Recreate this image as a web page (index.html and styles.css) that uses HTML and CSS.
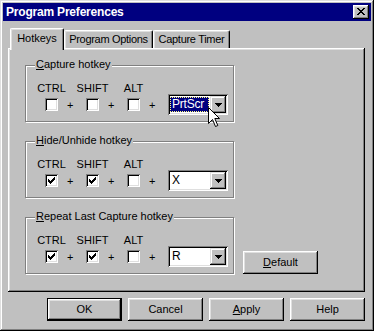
FILE: index.html
```html
<!DOCTYPE html>
<html>
<head>
<meta charset="utf-8">
<link rel="stylesheet" href="styles.css">
</head>
<body>
<div class="window">
  <div class="titlebar">
    <span class="title">Program Preferences</span>
    <span class="close"><svg width="8" height="7" viewBox="0 0 8 7"><path d="M0 0.5h2M6 0.5h2M1 1.5h2M5 1.5h2M2 2.5h4M3 3.5h2M2 4.5h4M1 5.5h2M5 5.5h2M0 6.5h2M6 6.5h2" stroke="#000" shape-rendering="crispEdges"/></svg></span>
  </div>
  <div class="content">
    <div class="tabs">
      <div class="tab active">Hotkeys</div>
      <div class="tab w-po">Program Options</div>
      <div class="tab w-ct">Capture Timer</div>
    </div>
    <div class="panel">
      <div class="row">
        <div class="group">
          <div class="legend"><u>C</u>apture hotkey</div>
          <div class="keys">
            <div class="lbl k1">CTRL</div>
            <div class="lbl k2">SHIFT</div>
            <div class="lbl k3">ALT</div>
            <span class="cb"></span><span class="plus">+</span>
            <span class="cb"></span><span class="plus">+</span>
            <span class="cb"></span><span class="plus">+</span>
            <div class="combo">
              <span class="val sel">PrtScr</span>
              <span class="drop"><svg width="7" height="4" viewBox="0 0 7 4"><path d="M0 0.5h7M1 1.5h5M2 2.5h3M3 3.5h1" stroke="#000" shape-rendering="crispEdges"/></svg></span>
              <svg class="cursor" width="13" height="21" viewBox="0 0 13 21"><path d="M0.5 0.5V16.5L4.5 12.5L7.5 19.5L9.8 18.5L6.8 11.5H11.5Z" fill="#fff" stroke="#000" stroke-linejoin="miter"/></svg>
            </div>
          </div>
        </div>
      </div>
      <div class="row">
        <div class="group">
          <div class="legend"><u>H</u>ide/Unhide hotkey</div>
          <div class="keys">
            <div class="lbl k1">CTRL</div>
            <div class="lbl k2">SHIFT</div>
            <div class="lbl k3">ALT</div>
            <span class="cb"><svg width="7" height="7" viewBox="0 0 7 7"><path d="M0 2h1v1h1v1h1v-1h1v-1h1v-1h1v-1h1v3h-1v1h-1v1h-1v1h-1v1h-1v-1h-1v-1h-1z" fill="#000"/></svg></span><span class="plus">+</span>
            <span class="cb"><svg width="7" height="7" viewBox="0 0 7 7"><path d="M0 2h1v1h1v1h1v-1h1v-1h1v-1h1v-1h1v3h-1v1h-1v1h-1v1h-1v1h-1v-1h-1v-1h-1z" fill="#000"/></svg></span><span class="plus">+</span>
            <span class="cb"></span><span class="plus">+</span>
            <div class="combo">
              <span class="val">X</span>
              <span class="drop"><svg width="7" height="4" viewBox="0 0 7 4"><path d="M0 0.5h7M1 1.5h5M2 2.5h3M3 3.5h1" stroke="#000" shape-rendering="crispEdges"/></svg></span>
            </div>
          </div>
        </div>
      </div>
      <div class="row">
        <div class="group">
          <div class="legend"><u>R</u>epeat Last Capture hotkey</div>
          <div class="keys">
            <div class="lbl k1">CTRL</div>
            <div class="lbl k2">SHIFT</div>
            <div class="lbl k3">ALT</div>
            <span class="cb"><svg width="7" height="7" viewBox="0 0 7 7"><path d="M0 2h1v1h1v1h1v-1h1v-1h1v-1h1v-1h1v3h-1v1h-1v1h-1v1h-1v1h-1v-1h-1v-1h-1z" fill="#000"/></svg></span><span class="plus">+</span>
            <span class="cb"><svg width="7" height="7" viewBox="0 0 7 7"><path d="M0 2h1v1h1v1h1v-1h1v-1h1v-1h1v-1h1v3h-1v1h-1v1h-1v1h-1v1h-1v-1h-1v-1h-1z" fill="#000"/></svg></span><span class="plus">+</span>
            <span class="cb"></span><span class="plus">+</span>
            <div class="combo">
              <span class="val">R</span>
              <span class="drop"><svg width="7" height="4" viewBox="0 0 7 4"><path d="M0 0.5h7M1 1.5h5M2 2.5h3M3 3.5h1" stroke="#000" shape-rendering="crispEdges"/></svg></span>
            </div>
          </div>
        </div>
        <button class="btn btn-default"><u>D</u>efault</button>
      </div>
    </div>
    <div class="buttons">
      <button class="btn btn-primary">OK</button>
      <button class="btn">Cancel</button>
      <button class="btn"><u>A</u>pply</button>
      <button class="btn">Help</button>
    </div>
  </div>
</div>
</body>
</html>
```

FILE: styles.css
```css
* { box-sizing: border-box; }
html, body { margin: 0; padding: 0; }
body {
  width: 374px;
  height: 331px;
  overflow: hidden;
  background: #c0c0c0;
  font-family: "Liberation Sans", Arial, sans-serif;
  font-size: 11px;
  color: #000;
}
.window {
  width: 374px;
  height: 331px;
  padding: 3px;
  background: #c0c0c0;
  box-shadow: inset -1px -1px #000, inset 1px 1px #dfdfdf, inset -2px -2px #808080, inset 2px 2px #fff;
  display: flex;
  flex-direction: column;
}
.titlebar {
  height: 18px;
  background: #000080;
  color: #fff;
  display: flex;
  align-items: center;
  padding: 0 2px 0 3px;
}
.title {
  flex: 1;
  font-weight: bold;
  font-size: 12px;
  letter-spacing: -0.2px;
  line-height: 18px;
}
.close {
  width: 16px;
  height: 14px;
  background: #c0c0c0;
  box-shadow: inset -1px -1px #000, inset 1px 1px #fff, inset -2px -2px #808080, inset 2px 2px #dfdfdf;
  display: flex;
  align-items: flex-start;
  justify-content: center;
  padding-top: 3px;
}
.close svg { display: block; }
.content {
  flex: 1;
  display: flex;
  flex-direction: column;
  padding: 7px 6px 0 5px;
}
.tabs {
  height: 20px;
  display: flex;
  align-items: flex-end;
  padding-left: 2px;
}
.tab {
  height: 18px;
  width: 54px;
  text-align: center;
  line-height: 13px;
  padding-top: 2px;
  white-space: nowrap;
  letter-spacing: -0.3px;
  background: #c0c0c0;
  border-top: 1px solid #fff;
  border-left: 1px solid #fff;
  border-right: 1px solid #000;
  border-radius: 2px 2px 0 0;
  box-shadow: inset -1px 0 #808080, inset 1px 1px #dfdfdf;
}
.tab.active {
  height: 22px;
  margin-bottom: -2px;
  padding-top: 3px;
  position: relative;
  z-index: 1;
  letter-spacing: 0;
}
.w-po { width: 89px; }
.w-ct { width: 77px; }
.panel {
  height: 244px;
  background: #c0c0c0;
  box-shadow: inset -1px -1px #000, inset 1px 1px #fff, inset -2px -2px #808080, inset 2px 2px #dfdfdf;
  padding: 17px 0 0 17px;
}
.row {
  display: flex;
  align-items: flex-end;
  margin-bottom: 19px;
}
.group {
  position: relative;
  width: 209px;
  height: 57px;
  border: 1px solid #808080;
  box-shadow: inset 1px 1px #fff, 1px 1px #fff;
  padding: 16px 0 0 11px;
}
.legend {
  position: absolute;
  top: -8px;
  left: 9px;
  padding: 0 1px;
  background: #c0c0c0;
  line-height: 13px;
  white-space: nowrap;
}
.keys {
  display: grid;
  grid-template-columns: 29px 12px 29px 12px 29px 12px auto;
  grid-template-rows: 12px 21px;
  align-items: center;
}
.lbl {
  grid-row: 1;
  display: flex;
  justify-content: center;
  line-height: 12px;
  white-space: nowrap;
}
.k1 { grid-column: 1; }
.k2 { grid-column: 3; }
.k3 { grid-column: 5; }
.cb {
  grid-row: 2;
  justify-self: center;
  width: 13px;
  height: 13px;
  background: #fff;
  box-shadow: inset 1px 1px #808080, inset -1px -1px #fff, inset 2px 2px #000, inset -2px -2px #dfdfdf;
  padding: 3px;
}
.cb svg { display: block; }
.plus {
  grid-row: 2;
  padding-left: 1px;
  line-height: 12px;
}
.combo {
  grid-row: 2;
  position: relative;
  width: 60px;
  height: 21px;
  margin-left: 8px;
  padding: 2px;
  display: flex;
  background: #fff;
  box-shadow: inset 1px 1px #808080, inset -1px -1px #fff, inset 2px 2px #000, inset -2px -2px #dfdfdf;
}
.val {
  flex: 1;
  padding-left: 2px;
  line-height: 17px;
  font-size: 12px;
  white-space: nowrap;
}
.val.sel {
  margin: 1px 1px 1px 0;
  padding-left: 1px;
  line-height: 13px;
  background: #000080;
  color: #fff;
  border: 1px dotted #ffff80;
  letter-spacing: -0.2px;
}
.drop {
  width: 16px;
  height: 17px;
  background: #c0c0c0;
  box-shadow: inset -1px -1px #000, inset 1px 1px #dfdfdf, inset -2px -2px #808080, inset 2px 2px #fff;
  display: flex;
  align-items: center;
  justify-content: center;
}
.drop svg { display: block; }
.cursor {
  position: absolute;
  left: 40px;
  top: 13px;
  z-index: 2;
}
button {
  font: inherit;
  color: #000;
  border: 0;
  margin: 0;
  padding: 0;
  background: #c0c0c0;
}
.btn {
  width: 75px;
  height: 23px;
  background: #c0c0c0;
  box-shadow: inset -1px -1px #000, inset 1px 1px #fff, inset -2px -2px #808080, inset 2px 2px #dfdfdf;
  text-align: center;
  line-height: 23px;
}
.btn-primary {
  box-shadow: inset 0 0 0 1px #000, inset -2px -2px #000, inset 2px 2px #fff, inset -3px -3px #808080, inset 3px 3px #dfdfdf;
}
.btn-default {
  margin-left: 9px;
}
.buttons {
  display: flex;
  justify-content: flex-end;
  gap: 6px;
  margin-top: 6px;
}
```
